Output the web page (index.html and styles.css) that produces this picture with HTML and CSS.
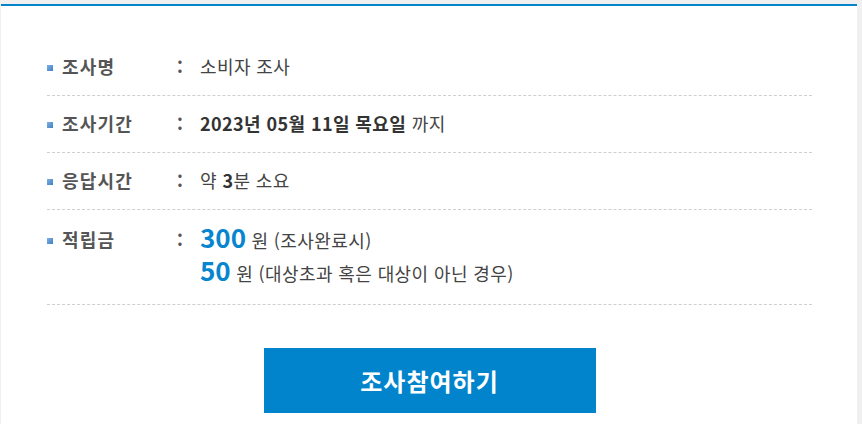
FILE: index.html
```html
<!DOCTYPE html>
<html lang="ko">
<head>
  <meta charset="UTF-8">
  <meta name="viewport" content="width=device-width, initial-scale=1.0">
  <title>설문 안내</title>
  <link rel="stylesheet" href="styles.css">
</head>
<body>

  <div class="survey-box">
    <ul class="survey-info">
      <li class="info-row">
        <span class="info-label">조사명</span>
        <span class="info-colon">:</span>
        <div class="info-value">소비자 조사</div>
      </li>
      <li class="info-row">
        <span class="info-label">조사기간</span>
        <span class="info-colon">:</span>
        <div class="info-value"><strong>2023년 05월 11일 목요일</strong> 까지</div>
      </li>
      <li class="info-row">
        <span class="info-label">응답시간</span>
        <span class="info-colon">:</span>
        <div class="info-value">약 <strong>3</strong>분 소요</div>
      </li>
      <li class="info-row reward-row">
        <span class="info-label">적립금</span>
        <span class="info-colon">:</span>
        <div class="info-value">
          <p class="reward"><em class="point">300</em> 원 (조사완료시)</p>
          <p class="reward"><em class="point">50</em> 원 (대상초과 혹은 대상이 아닌 경우)</p>
        </div>
      </li>
    </ul>

    <div class="btn-area">
      <button type="button" class="join-btn">조사참여하기</button>
    </div>
  </div>

</body>
</html>
```

FILE: styles.css
```css
body { margin: 0; background: #f0f0f0; font-family: "Noto Sans CJK KR", "Noto Sans", sans-serif; color: #444; }
.survey-box { width: 856px; margin: 4px 0 0 1px; border-top: 2px solid #0284cd; background: #fff; padding: 33px 45px 20px 46px; box-sizing: border-box; }
.survey-info { list-style: none; margin: 0; padding: 0; }
.info-row { display: flex; align-items: flex-start; padding: 17px 0 18px 0; border-bottom: 1px dashed #cfcfcf; font-size: 18px; line-height: 21px; }
.info-label { width: 130px; display: flex; align-items: center; font-weight: bold; color: #555; letter-spacing: 1.2px; }
.info-label::before { content: ""; width: 6px; height: 6px; margin: 3px 9px 0 0; background: linear-gradient(135deg, #7fb1e3, #3f7fc4); }
.info-colon { width: 23px; font-weight: bold; color: #555; }
.info-value { color: #444; letter-spacing: 0.4px; }
.info-value strong { color: #333; }
.reward-row { padding: 14px 0 14px 0; }
.reward-row .info-label, .reward-row .info-colon { padding-top: 5px; }
.reward { margin: 0; line-height: 33px; }
.point { display: inline-block; font-style: normal; font-weight: bold; font-size: 26px; line-height: 26px; letter-spacing: 0; color: #0785cf; }
.btn-area { display: flex; justify-content: center; padding-top: 43px; }
.join-btn { width: 332px; height: 65px; border: none; background: #0284cd; color: #fff; font-family: inherit; font-size: 24px; font-weight: bold; letter-spacing: 1px; cursor: pointer; }
```
